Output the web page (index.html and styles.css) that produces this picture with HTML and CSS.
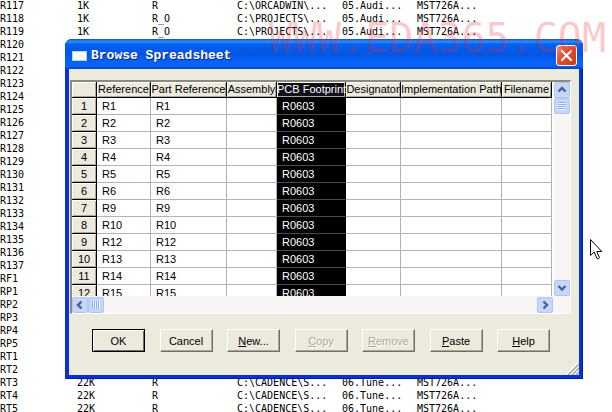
FILE: index.html
```html
<!DOCTYPE html>
<html lang="en">
<head>
    <meta charset="UTF-8">
    <meta name="viewport" content="width=device-width, initial-scale=1.0">
    <title>Browse Spreadsheet</title>
    <link rel="stylesheet" href="styles.css">
</head>
<body>
    <table class="parts">
        <colgroup>
            <col class="p-ref">
            <col class="p-value">
            <col class="p-type">
            <col class="p-path">
            <col class="p-sheet">
            <col class="p-chip">
        </colgroup>
        <tbody id="parts"></tbody>
    </table>

    <div class="dialog" role="dialog" aria-labelledby="title">
        <div class="titlebar">
            <span class="app-icon"></span>
            <h1 class="title" id="title">Browse Spreadsheet</h1>
            <button class="close" aria-label="Close">
                <svg viewBox="0 0 19 19" width="19" height="19" stroke="#fff" stroke-width="2.2" stroke-linecap="round">
                    <line x1="5" y1="5" x2="14" y2="14"></line>
                    <line x1="14" y1="5" x2="5" y2="14"></line>
                </svg>
            </button>
        </div>
        <div class="client">
            <div class="grid">
                <div class="view">
                    <div class="cells">
                        <table class="sheet">
                            <colgroup>
                                <col class="c-num">
                                <col class="c-ref">
                                <col class="c-part">
                                <col class="c-assembly">
                                <col class="c-footprint">
                                <col class="c-designator">
                                <col class="c-impl">
                                <col class="c-file">
                            </colgroup>
                            <thead>
                                <tr>
                                    <td class="corner"></td>
                                    <th>Reference</th>
                                    <th>Part Reference</th>
                                    <th>Assembly</th>
                                    <th class="selected">PCB Footprint</th>
                                    <th>Designator</th>
                                    <th>Implementation Path</th>
                                    <th>Filename</th>
                                </tr>
                            </thead>
                            <tbody id="sheet"></tbody>
                        </table>
                    </div>
                    <div class="scroll vertical">
                        <button class="arrow" aria-label="Scroll up">
                            <svg viewBox="0 0 14 14" width="14" height="14"><path d="M3.5 8.5 L7 5 L10.5 8.5"></path></svg>
                        </button>
                        <span class="thumb"></span>
                        <button class="arrow last" aria-label="Scroll down">
                            <svg viewBox="0 0 14 14" width="14" height="14"><path d="M3.5 5 L7 8.5 L10.5 5"></path></svg>
                        </button>
                    </div>
                </div>
                <div class="scroll horizontal">
                    <button class="arrow" aria-label="Scroll left">
                        <svg viewBox="0 0 14 14" width="14" height="14"><path d="M8.5 3.5 L5 7 L8.5 10.5"></path></svg>
                    </button>
                    <span class="thumb"></span>
                    <button class="arrow last" aria-label="Scroll right">
                        <svg viewBox="0 0 14 14" width="14" height="14"><path d="M5.5 3.5 L9 7 L5.5 10.5"></path></svg>
                    </button>
                </div>
            </div>
            <div class="actions">
                <button class="action default">OK</button>
                <button class="action">Cancel</button>
                <button class="action"><u>N</u>ew...</button>
                <button class="action" disabled><u>C</u>opy</button>
                <button class="action" disabled><u>R</u>emove</button>
                <button class="action"><u>P</u>aste</button>
                <button class="action"><u>H</u>elp</button>
            </div>
        </div>
        <svg class="grip" viewBox="0 0 12 12" width="12" height="12" stroke-width="1.5">
            <path stroke="#fff" d="M0 11 L11 0 M4 11 L11 4 M8 11 L11 8"></path>
            <path stroke="#a9a695" d="M1 12 L12 1 M5 12 L12 5 M9 12 L12 9"></path>
        </svg>
    </div>

    <div class="watermark">WWW.EDA365.COM</div>

    <svg class="cursor" viewBox="0 0 13 21" width="13" height="21">
        <path fill="#fff" stroke="#000" d="M0.5 0.5 V16.5 L4.2 13 L7 19.5 Q8.5 20.5 9.5 18.8 L6.8 12.5 H11.8 Z"></path>
    </svg>

    <script>
        const audio = ['C:\\PROJECTS\\...', '05.Audi...', 'MST726A...'];
        const tuner = ['22K', 'R', 'C:\\CADENCE\\S...', '06.Tune...', 'MST726A...'];
        const values = {
            R117: ['1K', 'R', 'C:\\ORCADWIN\\...', '05.Audi...', 'MST726A...'],
            R118: ['1K', 'R_O', ...audio],
            R119: ['1K', 'R_O', ...audio],
            RT3: tuner,
            RT4: tuner,
            RT5: tuner
        };

        const refs = [];
        for (let i = 117; i <= 137; i++) refs.push('R' + i);
        refs.push('RF1');
        for (let i = 1; i <= 5; i++) refs.push('RP' + i);
        for (let i = 1; i <= 5; i++) refs.push('RT' + i);

        const parts = document.querySelector('#parts');
        refs.forEach(ref => {
            const row = parts.insertRow();
            const cells = values[ref] || ['', '', '', '', ''];
            [ref, ...cells].forEach(text => row.insertCell().textContent = text);
        });

        const sheet = document.querySelector('#sheet');
        [1, 2, 3, 4, 5, 6, 9, 10, 12, 13, 14, 15].forEach((n, i) => {
            const row = sheet.insertRow();
            const head = document.createElement('th');
            head.textContent = i + 1;
            row.append(head);
            ['R' + n, 'R' + n, '', 'R0603', '', '', ''].forEach((text, col) => {
                const cell = row.insertCell();
                cell.textContent = text;
                if (col === 3) cell.className = 'selected';
            });
        });
    </script>
</body>
</html>
```
FILE: styles.css
```css
:root {
    --face: #ece9dd;
    --frame: #0831d9;
    --line: #b4b4b4;
    --shade: #aca899;
    --arrow: #4d6185;
}
* {
    box-sizing: border-box;
}
body {
    margin: 0;
    height: 100vh;
    position: relative;
    overflow: hidden;
    background-color: #fff;
    color: #000;
    font-family: 'Liberation Sans', Arial, sans-serif;
    font-size: 11px;
}
button {
    padding: 0;
    font: inherit;
    color: inherit;
}
table {
    border-spacing: 0;
    table-layout: fixed;
}
td, th {
    padding: 0;
    font-weight: normal;
    text-align: left;
    white-space: nowrap;
}

/* parts list behind the dialog */
.parts {
    width: 100%;
    margin-top: -1px;
    font-family: 'DejaVu Sans Mono', monospace;
    font-size: 10px;
    line-height: 13px;
}
.parts td {
    height: 13px;
}
.p-ref { width: 77px; }
.p-value { width: 75px; }
.p-type { width: 85px; }
.p-path { width: 105px; }
.p-sheet { width: 75px; }

/* dialog */
.dialog {
    position: absolute;
    top: 39px;
    left: 65px;
    right: 29px;
    padding: 0 4px 4px;
    border-radius: 7px 7px 0 0;
    background-color: var(--frame);
    box-shadow: inset 1px 0 #0a2fc0, inset -1px -1px #001a9c;
}
.titlebar {
    display: flex;
    align-items: center;
    gap: 4px;
    height: 30px;
    margin: 0 -4px;
    padding: 3px 6px 0 7px;
    border-radius: 7px 7px 0 0;
    background: linear-gradient(#0a4fd0, #2f8bff 8%, #0560ee 18%, #0455e3 50%, #0564fb 80%, #0463f5 90%, #0340c8);
}
.app-icon {
    width: 15px;
    height: 10px;
    background-color: #fff;
    border: 1px solid #b9d2f5;
}
.title {
    flex: 1;
    margin: 0;
    color: #fff;
    font-family: 'Liberation Mono', monospace;
    font-size: 13px;
    font-weight: bold;
    text-shadow: 1px 1px #0a2a80;
}
.close {
    display: flex;
    width: 21px;
    height: 21px;
    border: 1px solid #fff;
    border-radius: 3px;
    background: linear-gradient(135deg, #f0927a, #e0532f 40%, #c93a12);
}
.client {
    padding: 11px 8px 23px 1px;
    background-color: var(--face);
}

/* spreadsheet */
.grid {
    border: 1px solid #fff;
    border-top: 2px solid #8c8a80;
    border-left: 2px solid #8c8a80;
    background-color: #fff;
}
.view {
    display: flex;
    height: 214px;
}
.cells {
    flex: 1;
    min-width: 0;
    padding-right: 2px;
    overflow: hidden;
}
.sheet {
    width: 100%;
    line-height: 15px;
}
.c-num { width: 25px; }
.c-ref { width: 54px; }
.c-part { width: 76px; }
.c-assembly { width: 50px; }
.c-footprint { width: 69px; }
.c-designator { width: 55px; }
.c-impl { width: 101px; }
.sheet th, .corner {
    height: 16px;
    border-right: 1px solid #000;
    border-bottom: 1px solid #000;
    background-color: var(--face);
    box-shadow: inset 1px 1px #fff, inset -1px -1px var(--shade);
    text-align: center;
}
.sheet tbody th {
    height: 17px;
    line-height: 16px;
}
.sheet tbody td {
    height: 17px;
    padding-left: 5px;
    line-height: 16px;
    border-right: 1px solid var(--line);
    border-bottom: 1px solid var(--line);
}
.sheet th.selected {
    background-color: #101018;
    color: #fff;
}
.sheet td.selected {
    background-color: #000;
    color: #fff;
    border-right-color: #000;
    border-bottom-color: #4a4a4a;
}

/* scrollbars */
.scroll {
    display: flex;
    background-color: #f8f6f4;
}
.vertical {
    flex-direction: column;
    width: 16px;
}
.horizontal {
    height: 17px;
    padding-top: 1px;
    padding-right: 17px;
}
.arrow, .thumb {
    flex: none;
    width: 16px;
    height: 16px;
    border: 1px solid #b3c6f0;
    border-radius: 2px;
    background-color: #c6d5fb;
}
.arrow svg {
    display: block;
    fill: none;
    stroke: var(--arrow);
    stroke-width: 2.4;
}
.vertical .last {
    margin-top: auto;
}
.horizontal .last {
    margin-left: auto;
}
.thumb {
    padding: 3px;
    background-clip: content-box, border-box;
}
.vertical .thumb {
    background-image: repeating-linear-gradient(#eef4fe 0 1px, #8fb0f0 1px 2px), linear-gradient(#c6d5fb, #c6d5fb);
}
.horizontal .thumb {
    background-image: repeating-linear-gradient(90deg, #eef4fe 0 1px, #8fb0f0 1px 2px), linear-gradient(#c6d5fb, #c6d5fb);
}

/* buttons */
.actions {
    display: flex;
    justify-content: space-between;
    padding: 15px 21px 0 22px;
}
.action {
    width: 53px;
    height: 23px;
    border: 1px solid;
    border-color: #fff #716f64 #716f64 #fff;
    background-color: var(--face);
    box-shadow: inset -1px -1px var(--shade);
}
.action.default {
    border-color: #000;
    box-shadow: inset 1px 1px #fff, inset -1px -1px #716f64;
}
.action:disabled {
    color: var(--shade);
    text-shadow: 1px 1px #fff;
}
.grip {
    position: absolute;
    right: 4px;
    bottom: 4px;
}

/* things floating on top of everything */
.watermark {
    position: absolute;
    top: 15px;
    right: 6px;
    color: rgba(240, 40, 50, 0.25);
    font-family: 'DejaVu Sans Mono', monospace;
    font-size: 40px;
    line-height: 46px;
    pointer-events: none;
}
.cursor {
    position: absolute;
    top: 239px;
    left: 590px;
}
```
